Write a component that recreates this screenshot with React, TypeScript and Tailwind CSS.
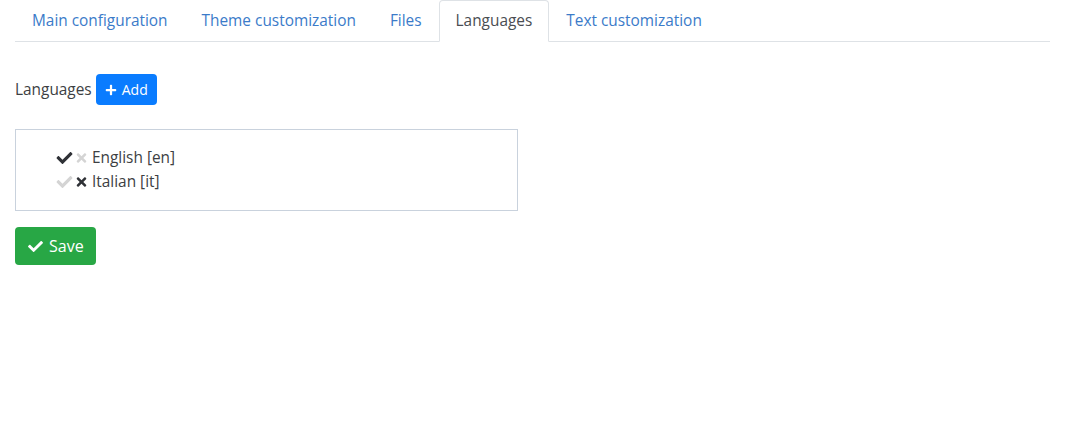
import React from "react";
import { FaCheck, FaTimes, FaPlus } from "react-icons/fa";

const tabs = ["Main configuration", "Theme customization", "Files", "Languages", "Text customization"];

export default function App() {
  return (
    <div className="min-h-[440px] bg-white px-[15px] text-[15.4px] leading-[24px] text-[#3d3f43]" style={{ fontFamily: '"Open Sans", "Liberation Sans", sans-serif' }}>
      <ul className="flex border-b border-[#dee2e6]">
        {tabs.map((t) => (
          <li key={t} className="-mb-px">
            {t === "Languages" ? (
              <span className="block rounded-t-[4px] border border-[#dee2e6] border-b-white bg-white px-4 py-2 text-[#4a4d52]">{t}</span>
            ) : (
              <span className="block border border-transparent px-4 py-2 text-[#3b7bc9]">{t}</span>
            )}
          </li>
        ))}
      </ul>
      <div className="mt-[32px] flex items-center">
        <span className="text-[#3d3f43]">Languages</span>
        <button className="ml-[4px] flex h-[31px] items-center gap-[5px] rounded-[4px] bg-[#0a7cff] px-[9px] text-[14px] text-white">
          <FaPlus className="h-[12px] w-[12px]" />
          Add
        </button>
      </div>
      <div className="mt-[24px] w-[503px] border border-[#c9d2dd] py-[16px] pl-[40px]">
        <div className="flex items-center gap-[2px]">
          <FaCheck className="h-[16px] w-[17px] text-[#2f3136]" />
          <FaTimes className="h-[14px] w-[13px] text-[#d4d4d4]" />
          <span className="ml-[2px]">English [en]</span>
        </div>
        <div className="flex items-center gap-[2px]">
          <FaCheck className="h-[16px] w-[17px] text-[#d4d4d4]" />
          <FaTimes className="h-[14px] w-[13px] text-[#2f3136]" />
          <span className="ml-[2px]">Italian [it]</span>
        </div>
      </div>
      <button className="mt-[16px] flex h-[38px] items-center gap-[5px] rounded-[4px] bg-[#28a745] px-[12px] text-[16px] text-white">
        <FaCheck className="h-[15px] w-[17px]" />
        Save
      </button>
    </div>
  );
}
